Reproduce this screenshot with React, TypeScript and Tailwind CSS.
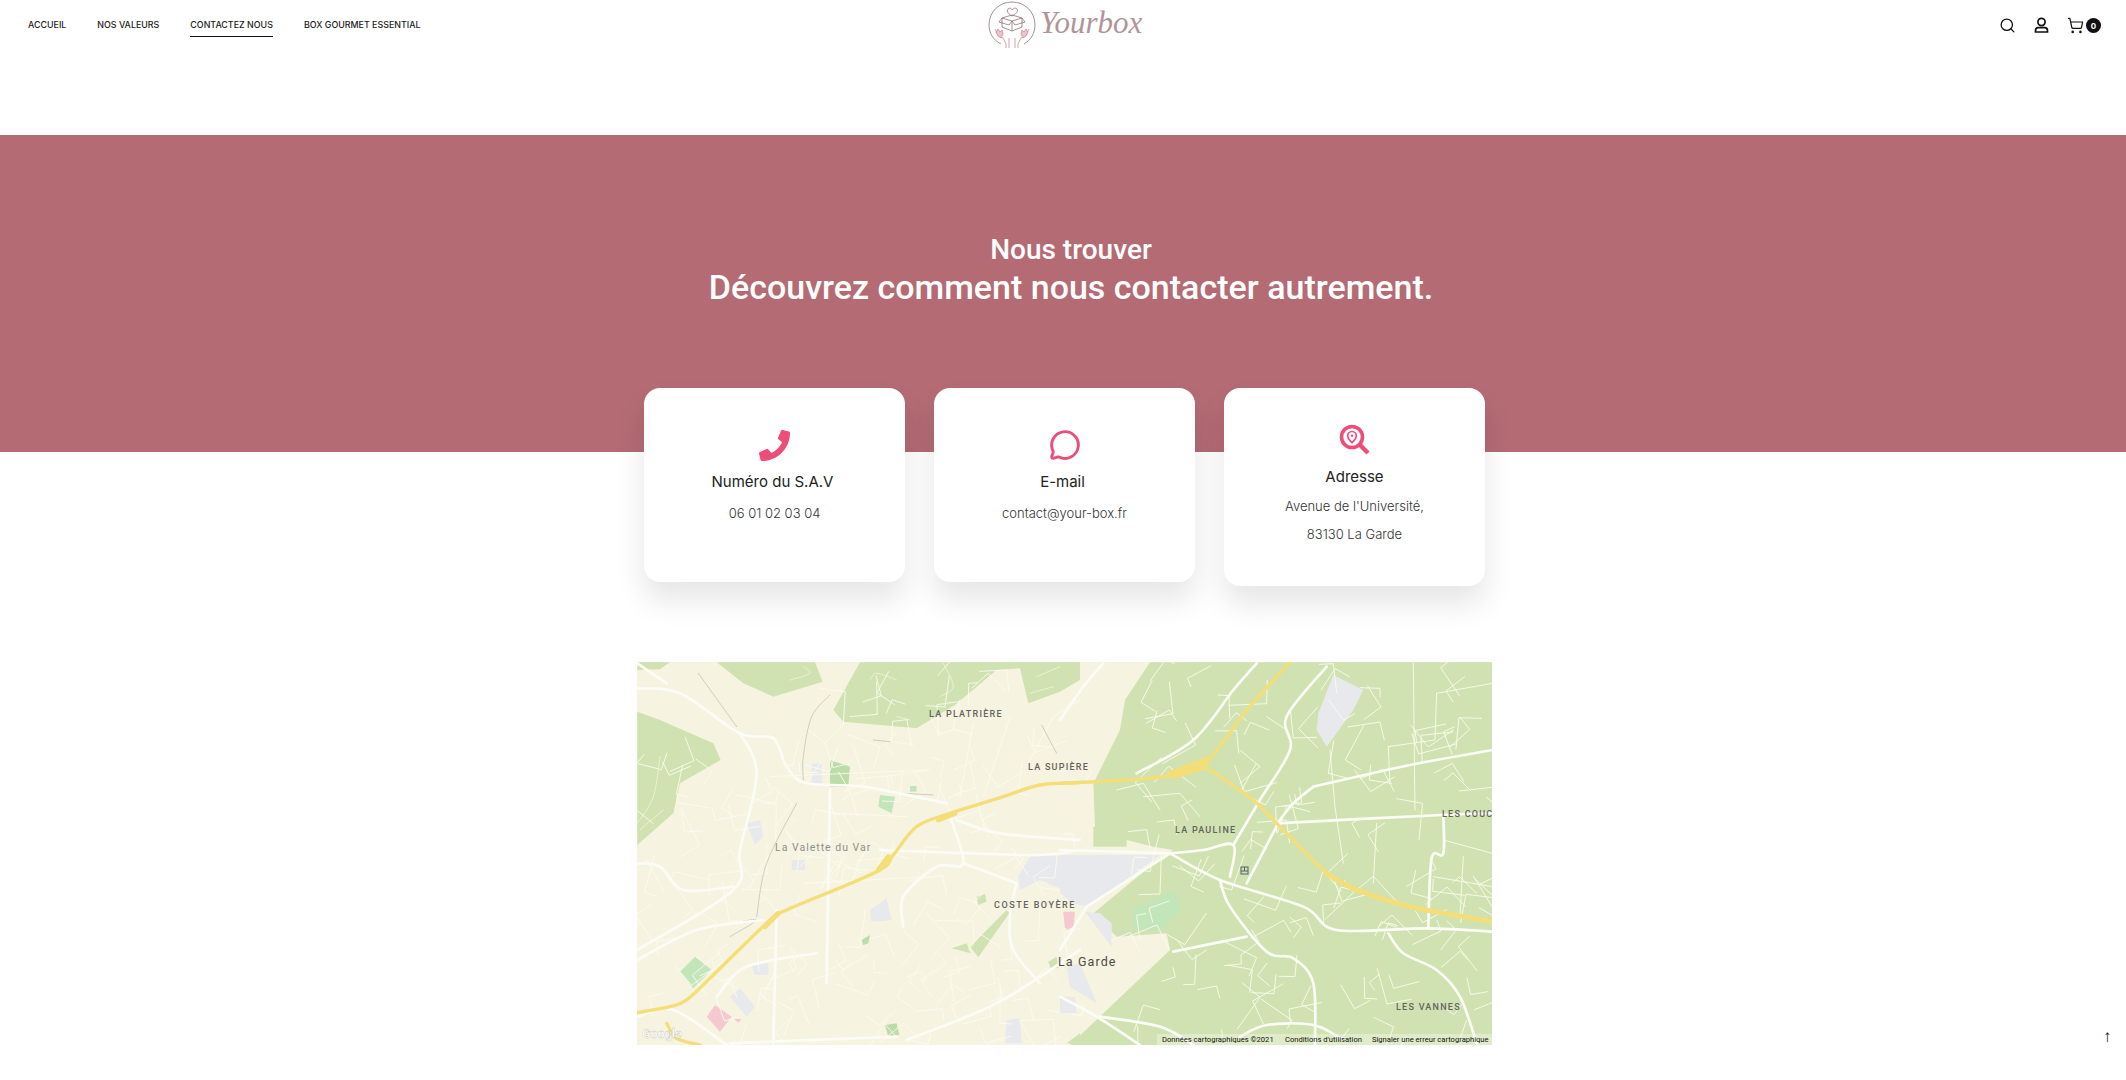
import { MessageCircle, Search, ShoppingCart } from "lucide-react";
import { FaPhoneAlt } from "react-icons/fa";

const sans = "font-['Inter','Liberation_Sans',sans-serif]";

const nav = [
  { label: "Accueil", active: false },
  { label: "Nos valeurs", active: false },
  { label: "Contactez nous", active: true },
  { label: "Box Gourmet Essential", active: false },
];

function Logo() {
  return (
    <div className="flex items-start h-[50px] w-[156px]">
      <svg width="50" height="50" viewBox="0 0 50 50" fill="none" stroke="#8f7379" strokeWidth="0.8" className="shrink-0">
        <path d="M14 44C6 40 2 33 2 25 2 12 12 2 25 2s23 10 23 23c0 8-4 15-11 19" />
        <path d="M25 16c-3-2-6-4-4-7 2-2 4 0 4 1 1-1 3-3 5-1 2 3-2 5-5 7Z" />
        <path d="M15 18l10-3 10 3-10 3Zm0 0v9l10 4 10-4v-9M25 21v10M15 18l-3 4 10 3 3-4M35 18l3 4-10 3-3-4" />
        <path d="M8 29l3 6 5 3 3 6v4M42 29l-3 6-5 3-3 6v4M22 48V38M28 48V38" stroke="#c98d96" />
        <path d="M9 32l2-3 2 3 2-2 1 4-2 4-3-2ZM41 32l-2-3-2 3-2-2-1 4 2 4 3-2Z" fill="#eac4c9" stroke="#c98d96" />
      </svg>
      <span className="ml-[3px] mt-[3px] font-['Liberation_Serif',serif] italic text-[31px] leading-[40px] text-[#b09499]">
        Yourbox
      </span>
    </div>
  );
}

function Header() {
  return (
    <header className={`relative flex h-[135px] items-start justify-between pl-[28px] pr-[25px] ${sans}`}>
      <nav className="flex gap-[31px] pt-[19px]">
        {nav.map((n) => (
          <a
            key={n.label}
            className={`block h-[18px] uppercase text-[8.9px] font-medium leading-[12px] text-[#222] ${n.active ? "border-b border-[#111]" : ""}`}
          >
            {n.label}
          </a>
        ))}
      </nav>
      <div className="absolute left-[987px] top-0">
        <Logo />
      </div>
      <div className="flex items-center gap-[17px] pt-[17px] text-[#111]">
        <Search size={17} strokeWidth={1.8} />
        <svg width="17" height="17" viewBox="0 0 17 17" fill="none" stroke="currentColor" strokeWidth="1.7">
          <circle cx="8.5" cy="5" r="3.6" />
          <path d="M2.5 15v-1.5c0-1.6 1.2-2.8 2.8-2.8h6.4c1.6 0 2.8 1.2 2.8 2.8V15Z" />
        </svg>
        <div className="relative flex w-[34px]">
          <ShoppingCart size={17} strokeWidth={1.7} />
          <span className="absolute left-[19px] top-[1px] flex h-[15px] w-[15px] items-center justify-center rounded-full bg-[#111] text-[8px] font-bold text-white">
            0
          </span>
        </div>
      </div>
    </header>
  );
}

function PinSearch() {
  return (
    <svg width="32" height="32" viewBox="0 0 32 32" fill="none" stroke="#ee4d78" strokeWidth="3.6">
      <circle cx="13" cy="13" r="10.5" />
      <path d="M21 21l8 8" strokeWidth="4.4" />
      <path d="M13 7.5c-2.6 0-4.3 2-4.3 4.2 0 2.7 4.3 7 4.3 7s4.3-4.3 4.3-7c0-2.2-1.7-4.2-4.3-4.2Z" strokeWidth="1.7" />
      <circle cx="13" cy="11.7" r="1.2" fill="#ee4d78" stroke="none" />
    </svg>
  );
}

function Card({ icon, title, lines, tall }: { icon: React.ReactNode; title: string; lines: string[]; tall?: boolean }) {
  return (
    <div
      className={`flex flex-col items-center rounded-[16px] bg-white shadow-[0_18px_30px_rgba(0,0,0,0.1)] ${tall ? "h-[198px] pt-[36px]" : "h-[194px] pt-[41px]"}`}
    >
      <div className="flex h-[32px] items-center justify-center">{icon}</div>
      <div className={`mt-[9px] text-[15px] leading-[24px] text-[#222] ${tall ? "" : "pr-[4px]"}`}>{title}</div>
      <div className={`${tall ? "mt-[3px]" : "mt-[5px]"} text-[13px] leading-[28px] font-light text-[#333] text-center`}>
        {lines.map((l) => (
          <div key={l}>{l}</div>
        ))}
      </div>
    </div>
  );
}

/* Pale street network scattered over the map, from a fixed seed */
function streets(seed: number, count: number, x0: number, x1: number, y0: number, y1: number) {
  let s = seed;
  const r = () => {
    s = (s * 16807) % 2147483647;
    return s / 2147483647;
  };
  const out: string[] = [];
  for (let i = 0; i < count; i++) {
    const x = x0 + r() * (x1 - x0);
    const y = y0 + r() * (y1 - y0);
    const a = r() * 6.283;
    const l = 40 + r() * 80;
    const b = a + (r() > 0.5 ? 1.5 : -1.5);
    const l2 = 25 + r() * 60;
    const x2 = x + Math.cos(a) * l;
    const y2 = y + Math.sin(a) * l;
    out.push(`${x | 0},${y | 0} ${x2 | 0},${y2 | 0} ${(x2 + Math.cos(b) * l2) | 0},${(y2 + Math.sin(b) * l2) | 0}`);
  }
  return out;
}

const left = {
  forest: [
    "22,37 120,37 90,58 22,60",
    "260,37 555,37 578,95 430,140 340,100",
    "690,37 610,180 640,215 860,235 975,165 1100,60 1170,55 1195,160 1290,125 1350,90 1350,37",
    "22,185 90,210 250,280 272,330 150,400 130,490 22,585",
    "1020,890 1130,780 1138,790 1045,922",
    "965,895 1010,880 1022,910",
    "1040,740 1065,732 1070,755 1045,765",
    "1255,935 1280,920 1285,955 1262,955",
    "1310,1180 1350,1150 1350,1185",
  ],
  mint: [
    "750,435 795,440 785,490 745,470",
    "150,965 195,920 245,960 190,1015",
    "840,408 860,408 860,425 840,425",
  ],
  deep: ["600,330 660,350 655,410 600,410", "765,1125 800,1120 808,1155 775,1160", "695,870 720,855 715,880 700,885"],
  grey: [
    "300,1040 330,1015 375,1070 350,1100",
    "350,520 390,510 400,560 375,585",
    "545,340 575,340 575,400 545,400",
    "720,780 770,745 785,810 725,815",
    "485,630 525,630 525,660 485,660",
    "365,945 415,940 415,975 375,975",
    "1165,680 1200,620 1350,615 1350,740 1230,690 1170,720",
    "1130,1110 1170,1105 1175,1180 1125,1180",
    "1320,950 1350,940 1350,1000 1325,990",
  ],
  pink: ["230,1100 255,1065 305,1100 270,1145", "310,1105 335,1108 325,1118", "1300,785 1335,785 1325,830 1305,835"],
  white: [
    "22,115 150,130 330,250 430,265 470,350 530,400 700,410 950,460",
    "330,250 380,370 330,600 310,720 22,900",
    "600,420 590,1000",
    "440,780 430,1180",
    "960,500 1000,640 920,650 820,740 820,830",
    "1000,640 1160,700",
    "980,510 1110,550 1350,570",
    "750,600 1200,615 1350,600",
    "1160,700 1140,800 1150,900 1230,1000",
    "22,640 90,650 160,720 310,710",
    "22,930 200,840 400,810",
    "260,1040 350,950 560,910",
    "830,1170 1100,1060 1350,900",
    "300,1180 800,1160",
    "22,1100 130,1080 290,1185",
    "22,40 110,100",
  ],
  thin: [
    ...streets(4711, 150, 22, 1350, 240, 1185),
    ...streets(91, 14, 640, 1100, 50, 230),
    "420,380 900,360", "610,490 830,500", "520,700 900,680", "1060,440 1140,200", "1030,220 990,440",
    "1200,330 1270,200 1350,150",
  ],
  lineGreen: ["90,320 70,440 22,520", "100,480 30,540", "720,90 740,70 800,90", "1200,130 1270,110", "1220,80 1290,50", "480,90 540,70 520,50", "930,140 970,110 940,40", "800,200 840,210"],
  track: ["205,70 320,230", "600,135 545,200 520,320 520,390", "500,460 410,640 380,800", "730,270 780,275", "820,430 910,435", "310,820 380,810 300,860", "1235,225 1280,310"],
  yellow: [
    "22,1088 120,1070 170,1050 250,975 420,810 470,780 740,665 790,615 860,530 960,490 1120,440 1230,405 1350,398",
    "110,1120 140,1165 210,1185",
  ],
  wide: ["405,830 445,790", "745,660 775,620", "925,510 975,490"],
};

const right = {
  forest: [
    "270,37 1297,37 1297,1185 30,1185 330,900 320,850 170,860 100,790 300,625 340,600 280,590 200,570 105,530 100,400 110,380 180,240 195,150",
    "0,37 45,100 0,100",
    "100,530 200,530 200,590 100,590",
  ],
  mint: ["215,780 340,720 365,780 300,840 225,840"],
  grey: [
    "0,615 300,615 130,740 80,770 40,760 0,730",
    "75,785 120,790 155,820 155,890",
    "820,75 910,120 880,180 800,290 770,240 775,190",
    "20,950 60,940 110,1060 30,1010",
    "0,1040 45,1040 50,1090 0,1090",
  ],
  pink: ["10,790 45,790 40,830 20,840"],
  white: [
    "330,610 480,690 730,770 830,840 1100,835 1297,845",
    "480,690 510,770 620,905 700,925 760,1000 765,1185",
    "330,610 430,600 520,585 510,680",
    "520,585 600,450 690,300 680,200 800,50",
    "650,520 1145,495 1297,490",
    "760,410 1050,345 1297,300",
    "660,510 700,460 760,410",
    "80,770 330,610",
    "0,600 330,610",
    "0,1040 110,1100 240,1185",
    "120,1100 300,1130 400,1185",
    "540,1160 620,1125 760,1125 850,1170",
    "230,370 400,270 520,120 590,40",
    "80,770 0,900",
    "1150,495 1150,610 1115,625 1105,830",
    "985,850 1030,910 1130,960 1200,1040 1250,1180",
    "340,905 560,860",
    "130,40 70,110 0,210",
    "660,510 560,700",
  ],
  thin: [
    ...streets(12345, 130, 200, 1297, 40, 1185),
    "1060,40 1065,480", "1130,130 1297,100", "1130,130 1125,270 985,290", "985,290 990,400",
    "620,200 680,240", "540,300 600,350 540,400", "250,440 360,430 420,500", "170,420 250,400 300,480",
    "810,300 825,470 850,640", "950,520 940,700", "1150,570 1297,610", "1120,680 1297,710", "1210,620 1200,800",
  ],
  yellow: [
    "0,400 200,390 340,375 440,335 560,180 690,37",
    "450,360 580,450 660,530 790,660 880,715 1050,770 1297,815",
  ],
  wide: ["330,370 450,325", "340,380 440,350", "800,670 880,715 1050,770 1297,815"],
};

/* Turn a list of points into a smooth curve */
function smooth(points: string) {
  const p = points.split(" ").map((q) => q.split(",").map(Number));
  if (p.length < 3) return `M${p[0]}L${p[1]}`;
  let d = `M${p[0][0]} ${p[0][1]}`;
  for (let i = 0; i < p.length - 1; i++) {
    const a = p[Math.max(0, i - 1)];
    const b = p[i];
    const c = p[i + 1];
    const e = p[Math.min(p.length - 1, i + 2)];
    d += `C${b[0] + (c[0] - a[0]) / 6} ${b[1] + (c[1] - a[1]) / 6} ${c[0] - (e[0] - b[0]) / 6} ${c[1] - (e[1] - b[1]) / 6} ${c[0]} ${c[1]}`;
  }
  return d;
}

function Layer({ d, tx }: { d: any; tx: number }) {
  const polys = (list: string[] | undefined, fill: string) =>
    (list || []).map((p) => <polygon key={fill + p} points={p} fill={fill} />);
  const lines = (list: string[] | undefined, stroke: string, w: number) =>
    (list || []).map((p, i) => (
      <path key={stroke + w + i} d={smooth(p)} fill="none" stroke={stroke} strokeWidth={w} strokeLinecap="round" />
    ));
  const straight = (list: string[] | undefined, stroke: string, w: number) =>
    (list || []).map((p, i) => (
      <polyline key={stroke + w + i} points={p} fill="none" stroke={stroke} strokeWidth={w} strokeLinecap="round" strokeLinejoin="round" />
    ));
  return (
    <g transform={`translate(${tx} -12) scale(0.3333)`}>
      {polys(d.forest, "#d1e2b2")}
      {polys(d.mint, "#c3e5ba")}
      {polys(d.deep, "#bcdcaa")}
      {polys(d.grey, "#e7e9ec")}
      {polys(d.pink, "#f4c9d0")}
      {lines(d.lineGreen, "#eef4d6", 2.5)}
      {straight(d.thin, "#fbfbf0", 2.6)}
      {lines(d.track, "#b9b9b4", 2)}
      {lines(d.white, "#fcfcf6", 8)}
      {lines(d.yellow, "#f3de78", 10)}
      {lines(d.wide, "#f3de78", 15)}
    </g>
  );
}

function MapView() {
  const label = "font-['Roboto','Liberation_Sans',sans-serif]";
  return (
    <div className="mt-[76px] flex justify-center pl-[3px]">
      <svg width="855" height="383" viewBox="0 0 855 383" className={`block ${label}`}>
        <defs>
          <filter id="soft">
            <feGaussianBlur stdDeviation="0.7" />
          </filter>
        </defs>
        <rect width="855" height="383" fill="#f7f3e1" />
        <g filter="url(#soft)">
          <Layer d={left} tx={-7} />
          <Layer d={right} tx={423} />
        </g>
        <g transform="translate(0 1)">
          <g fontWeight="500" fontSize="9" fill="#63635e" letterSpacing="1.25">
            <text x="292" y="54">LA PLATRIÈRE</text>
            <text x="391" y="107">LA SUPIÈRE</text>
            <text x="357" y="245" letterSpacing="1.55">COSTE BOYÈRE</text>
            <text x="538" y="170">LA PAULINE</text>
            <text x="805" y="154">LES COUC</text>
            <text x="759" y="347">LES VANNES</text>
          </g>
          <text x="138" y="188" fontSize="10.5" letterSpacing="1" fill="#8f8f8a">La Valette du Var</text>
          <text x="421" y="303" fontSize="12.5" letterSpacing="1.1" fill="#4b4b48">La Garde</text>
          <g transform="translate(604 204)" fill="none" stroke="#55606e" strokeWidth="1">
            <rect x="0" y="0" width="7" height="7" />
            <path d="M0 4h7M3.5 0v4" />
          </g>
          <text x="5" y="375" fontSize="12.5" fontWeight="700" fill="#ffffff" stroke="#b8b8b0" strokeWidth="0.3">Google</text>
          <rect x="520" y="371" width="335" height="11" fill="#ffffff" opacity="0.3" />
          <g fontSize="7.6" fill="#111">
            <text x="525" y="379">Données cartographiques ©2021</text>
            <text x="648" y="379">Conditions d'utilisation</text>
            <text x="735" y="379">Signaler une erreur cartographique</text>
          </g>
        </g>
      </svg>
    </div>
  );
}

export default function App() {
  return (
    <div className={`relative h-[1080px] overflow-hidden bg-white ${sans}`}>
      <Header />
      <section className="h-[317px] bg-[#b46b74] pt-[97px] pl-[16px] text-center font-['Roboto','Liberation_Sans',sans-serif] font-medium text-white">
        <div className="text-[28px] leading-[36px]">Nous trouver</div>
        <div className="text-[34px] leading-[38px]">Découvrez comment nous contacter autrement.</div>
      </section>
      <div className="-mt-[64px] flex justify-center pl-[3px]">
        <div className="grid w-[841px] grid-cols-3 items-start gap-[29px]">
          <Card icon={<FaPhoneAlt size={31} color="#ee4d78" className="-scale-x-100" />} title="Numéro du S.A.V" lines={["06 01 02 03 04"]} />
          <Card icon={<MessageCircle size={32} color="#ee4d78" strokeWidth={2.2} />} title="E-mail" lines={["contact@your-box.fr"]} />
          <Card tall icon={<PinSearch />} title="Adresse" lines={["Avenue de l'Université,", "83130 La Garde"]} />
        </div>
      </div>
      <MapView />
      <span className="absolute left-[2103px] top-[1028px] font-['Liberation_Sans',sans-serif] text-[17px] leading-[18px] text-[#111]">↑</span>
    </div>
  );
}
